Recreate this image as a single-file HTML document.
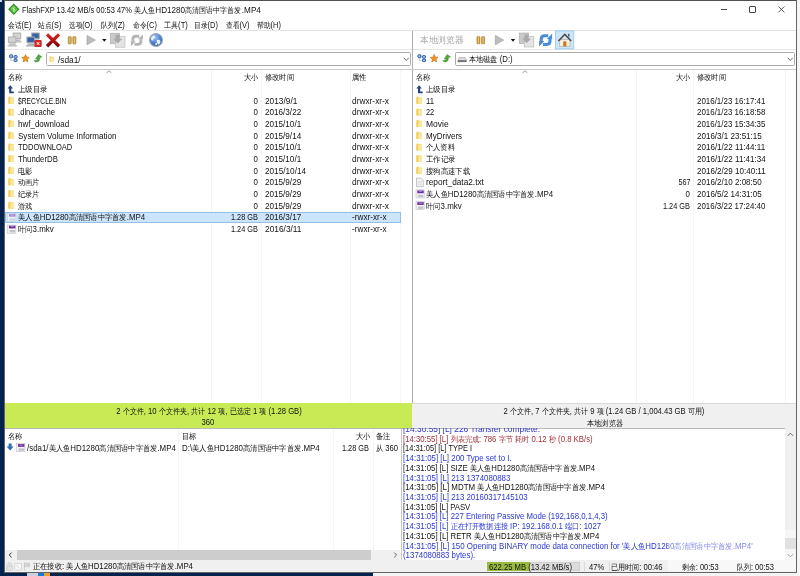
<!DOCTYPE html>
<html lang="zh">
<head>
<meta charset="utf-8">
<title>FlashFXP</title>
<style>
html,body{margin:0;padding:0;}
body{width:800px;height:576px;overflow:hidden;position:relative;background:#fbfbfb;font-family:"Liberation Sans",sans-serif;font-size:8.7px;color:#111;}
.a{position:absolute;}
.t{position:absolute;white-space:pre;line-height:12px;height:12px;}
.c{font-size:0.87em;display:inline-block;}
.hl{position:absolute;height:1px;}
.vl{position:absolute;width:1px;}
svg{position:absolute;overflow:visible;}
</style>
</head>
<body>
<!-- desktop behind the window -->
<div class="a" style="left:0;top:0;width:5px;height:576px;background:#04224e;"></div>
<div class="a" style="left:0;top:571.5px;width:373px;height:4.5px;background:#04224e;"></div>
<div class="a" style="left:373px;top:571.5px;width:427px;height:4.5px;background:#f4f4f4;"></div>
<div class="a" style="left:797px;top:0;width:3px;height:576px;background:#f6f6f6;"></div>
<div class="a" style="left:0;top:0;width:2px;height:1.5px;background:#c8d4e4;"></div>
<div class="a" style="left:27px;top:573px;width:11px;height:3px;background:#c9d3e0;"></div>
<div class="a" style="left:38px;top:573px;width:6px;height:3px;background:#1a78d6;"></div>
<div class="a" style="left:44px;top:573px;width:6px;height:3px;background:#eaa12e;"></div>

<!-- window -->
<div class="a" id="win" style="left:4px;top:0;width:793px;height:572.5px;background:#fff;box-sizing:border-box;border:1px solid #646464;border-top-color:#505050;"></div>

<!--CHROME_BEGIN-->
<!-- ===== lines / panels ===== -->
<div class="hl" style="left:5px;top:30px;width:791px;background:#e4e4e4;"></div>
<div class="hl" style="left:5px;top:49.1px;width:791px;background:#e6e6e6;height:1.2px;"></div>
<div class="a" style="left:411.9px;top:30.5px;width:1.3px;height:373px;background:#b0b0b0;"></div>
<!-- address boxes -->
<div class="a" style="left:46px;top:51.8px;width:364.5px;height:14.5px;box-sizing:border-box;border:1px solid #acacac;border-radius:1.5px;background:#fff;"></div>
<div class="a" style="left:454.5px;top:51.8px;width:340px;height:14.5px;box-sizing:border-box;border:1px solid #acacac;border-radius:1.5px;background:#fff;"></div>
<svg style="left:402.5px;top:57px;" width="7" height="5" viewBox="0 0 7 5"><path d="M0.8 0.8 L3.3 3.4 L5.8 0.8" fill="none" stroke="#555" stroke-width="0.9"/></svg>
<svg style="left:786.5px;top:57px;" width="7" height="5" viewBox="0 0 7 5"><path d="M0.8 0.8 L3.3 3.4 L5.8 0.8" fill="none" stroke="#555" stroke-width="0.9"/></svg>
<!-- list top border -->
<div class="hl" style="left:5px;top:69.4px;width:791px;background:#cacaca;"></div>
<!-- column lines left -->
<div class="vl" style="left:210.8px;top:70px;height:333px;background:#f4f4f4;"></div>
<div class="vl" style="left:260.8px;top:70px;height:333px;background:#f4f4f4;"></div>
<div class="vl" style="left:349.5px;top:70px;height:333px;background:#f4f4f4;"></div>
<div class="vl" style="left:400.2px;top:70px;height:333px;background:#f4f4f4;"></div>
<!-- column lines right -->
<div class="vl" style="left:636px;top:70px;height:333px;background:#f4f4f4;"></div>
<div class="vl" style="left:693px;top:70px;height:333px;background:#f4f4f4;"></div>
<div class="vl" style="left:785.2px;top:70px;height:333px;background:#f4f4f4;"></div>
<!-- sort arrows -->
<svg style="left:105.5px;top:70px;" width="6" height="4" viewBox="0 0 6 4"><path d="M0.6 3 L3 0.8 L5.4 3" fill="none" stroke="#8a8a8a" stroke-width="0.8"/></svg>
<svg style="left:522px;top:70px;" width="6" height="4" viewBox="0 0 6 4"><path d="M0.6 3 L3 0.8 L5.4 3" fill="none" stroke="#8a8a8a" stroke-width="0.8"/></svg>
<!-- selection -->
<div class="a" style="left:5.4px;top:211.8px;width:395.6px;height:11.4px;box-sizing:border-box;border:1px solid #94bfe6;background:#cde5fb;"></div>
<!-- status strips -->
<div class="a" style="left:5px;top:403.4px;width:407px;height:24.6px;background:#c8ea54;"></div>
<div class="a" style="left:412.4px;top:403.4px;width:383.6px;height:24.6px;background:#f0f0f0;border-top:1px solid #d9d9d9;box-sizing:border-box;"></div>
<div class="hl" style="left:5px;top:427.8px;width:791px;background:#b9b9b9;"></div>
<!-- queue -->
<div class="vl" style="left:178.4px;top:428.5px;height:122px;background:#f4f4f4;"></div>
<div class="vl" style="left:333px;top:428.5px;height:122px;background:#f4f4f4;"></div>
<div class="vl" style="left:372.5px;top:428.5px;height:122px;background:#f4f4f4;"></div>
<div class="a" style="left:400.7px;top:428.6px;width:1.2px;height:131.4px;background:#c6c6c6;"></div>
<!-- queue h-scrollbar -->
<div class="a" style="left:5px;top:550.4px;width:395px;height:9.4px;background:#f0f0f0;"></div>
<div class="a" style="left:17px;top:550.4px;width:354px;height:9.4px;background:#cdcdcd;"></div>
<svg style="left:7.5px;top:552px;" width="5" height="6" viewBox="0 0 5 6"><path d="M3.6 0.6 L1.2 3 L3.6 5.4" fill="none" stroke="#333" stroke-width="1"/></svg>
<svg style="left:392.5px;top:552px;" width="5" height="6" viewBox="0 0 5 6"><path d="M1.2 0.6 L3.6 3 L1.2 5.4" fill="none" stroke="#555" stroke-width="0.9"/></svg>
<!-- log v-scrollbar -->
<div class="a" style="left:784.6px;top:428.4px;width:11.4px;height:131.6px;background:#f0f0f0;"></div>
<div class="a" style="left:784.6px;top:538px;width:11.4px;height:11px;background:#cdcdcd;"></div>
<svg style="left:787px;top:432px;" width="7" height="5" viewBox="0 0 7 5"><path d="M0.8 3.8 L3.4 1.2 L6 3.8" fill="none" stroke="#555" stroke-width="0.9"/></svg>
<svg style="left:787px;top:552.5px;" width="7" height="5" viewBox="0 0 7 5"><path d="M0.8 1.2 L3.4 3.8 L6 1.2" fill="none" stroke="#555" stroke-width="0.9"/></svg>
<!-- bottom status bar -->
<div class="a" style="left:5px;top:559.8px;width:791px;height:11.8px;background:#f0f0f0;"></div>
<div class="a" style="left:487px;top:562px;width:93px;height:9.2px;background:#dcdcdc;box-sizing:border-box;border:1px solid #cfcfcf;"></div>
<div class="a" style="left:487px;top:562px;width:42.8px;height:9.2px;background:#9bbb3f;"></div>
<div class="vl" style="left:583.5px;top:561.5px;height:9px;background:#dadada;"></div>
<div class="vl" style="left:608.5px;top:561.5px;height:9px;background:#dadada;"></div>
<div class="a" id="wm2" style="left:668px;top:560px;width:128px;height:11px;background:#f8f8f8;"></div>
<!-- window buttons -->
<div class="hl" style="left:721px;top:9.1px;width:6px;background:#444;height:0.9px;"></div>
<div class="a" style="left:749.2px;top:6.3px;width:6.4px;height:6.4px;box-sizing:border-box;border:0.9px solid #444;border-radius:1px;"></div>
<svg style="left:777.8px;top:6.1px;" width="7" height="7" viewBox="0 0 7 7"><path d="M0.4 0.4 L6.4 6.4 M6.4 0.4 L0.4 6.4" fill="none" stroke="#333" stroke-width="0.8"/></svg>
<!--CHROME_END-->
<!--ICONS_BEGIN-->
<!-- ===== icons ===== -->
<svg style="left:0;top:0;" width="800" height="576" viewBox="0 0 800 576">
<defs>
 <linearGradient id="gx" gradientUnits="userSpaceOnUse" x1="0" y1="33" x2="0" y2="47"><stop offset="0" stop-color="#dc2a2a"/><stop offset="0.5" stop-color="#b51414"/><stop offset="1" stop-color="#6a0606"/></linearGradient>
 <linearGradient id="gp" x1="0" y1="0" x2="1" y2="0"><stop offset="0" stop-color="#b98a2f"/><stop offset="0.5" stop-color="#e5c476"/><stop offset="1" stop-color="#b98a2f"/></linearGradient>
 <radialGradient id="gg" cx="0.4" cy="0.3" r="0.8"><stop offset="0" stop-color="#a9c8f0"/><stop offset="0.55" stop-color="#4a7fd0"/><stop offset="1" stop-color="#234f9a"/></radialGradient>
 <g id="folder"><path d="M0.2 0.5 h2.2 l0.8 0.8 h2.5 v6.2 h-5.5z" fill="#f6d362"/><path d="M2 1.9 h3.7 v5.6 h-3.7z" fill="#fae7a0"/><path d="M0.2 1.9 h1.8 v5.6 h-1.8z" fill="#f4cf5c"/></g>
 <g id="up"><path d="M2.6 0 L5.4 3.3 H3.7 V6.3 H6.2 V8 H1.6 V3.3 H0 Z" fill="#1f3f86"/></g>
 <g id="vid"><rect x="0.3" y="0.3" width="8.2" height="8.1" fill="#f3f3f6" stroke="#b4b4bc" stroke-width="0.5"/><rect x="1.6" y="0.9" width="6.4" height="2.7" fill="#6a2c9c"/><rect x="3.2" y="1.6" width="3.2" height="0.6" fill="#cdb0e6"/><rect x="2.2" y="5.2" width="5.4" height="2.4" fill="#c2c2ca"/></g>
 <g id="vids"><rect x="0.3" y="0.3" width="8.2" height="8.1" fill="#e9f1fa" stroke="#b9c6d8" stroke-width="0.5"/><rect x="1.6" y="0.9" width="6.4" height="2.7" fill="#a488d2"/><rect x="3.2" y="1.6" width="3.2" height="0.6" fill="#dccdf0"/><rect x="2.2" y="5.2" width="5.4" height="2.4" fill="#cdd4e0"/></g>
 <g id="txt"><path d="M0.3 0.3 h4.8 l2 2 v6.5 h-6.8z" fill="#f1f1f1" stroke="#a8a8a8" stroke-width="0.6"/><path d="M1.5 3.6h4.2M1.5 5.1h4.2M1.5 6.6h4.2" stroke="#cfcfcf" stroke-width="0.5"/></g>
 <g id="pc1"><rect x="0" y="0" width="8.6" height="6.6" rx="0.6" fill="#b5b5b5"/><rect x="1.1" y="1" width="6.4" height="4.3" fill="#d3d3d3"/><rect x="1.2" y="7" width="6.6" height="1.3" fill="#b5b5b5"/><rect x="-0.4" y="8.6" width="9.6" height="1.3" rx="0.4" fill="#b5b5b5"/></g>
 <g id="pc2"><rect x="0" y="0" width="8.6" height="6.6" rx="0.6" fill="#9da3ac"/><rect x="1.1" y="1" width="6.4" height="4.3" fill="#3460a8"/><rect x="1.2" y="7" width="6.6" height="1.3" fill="#9da3ac"/><rect x="-0.4" y="8.6" width="9.6" height="1.3" rx="0.4" fill="#9da3ac"/></g>
 <g id="tree"><rect x="0.4" y="0.4" width="3" height="3" rx="0.7" fill="#9dbfec" stroke="#1d4f9e" stroke-width="0.9"/><rect x="4.9" y="1.2" width="3" height="2.6" rx="0.7" fill="#9dbfec" stroke="#1d4f9e" stroke-width="0.9"/><rect x="4.9" y="4.6" width="3" height="2.6" rx="0.7" fill="#9dbfec" stroke="#1d4f9e" stroke-width="0.9"/><path d="M1.6 4.2 V6 H4.2" fill="none" stroke="#a9b4c4" stroke-width="0.7"/></g>
 <g id="star"><path d="M4 0.2 L5.1 2.8 L7.8 3.1 L5.8 5 L6.4 7.6 L4 6.3 L1.6 7.6 L2.2 5 L0.2 3.1 L2.9 2.8 Z" fill="#f7961c" stroke="#b06a1e" stroke-width="0.6" stroke-linejoin="round"/></g>
 <g id="garrow"><path d="M4.6 0 L8 2.6 L5.6 3.4 C6.3 5.4 5.2 7.2 2.6 7.6 C1.4 7.7 0.6 7 0 6.1 C2 6.6 3.4 5.7 3.2 4.1 L1.4 4.7 Z" fill="#4fa83a" stroke="#2f7d22" stroke-width="0.4"/></g>
 <g id="xfer"><rect x="0" y="0" width="9.2" height="10.6" fill="#c9c9c9" stroke="#a9a9a9" stroke-width="0.6"/><rect x="5" y="3.4" width="9.6" height="10.6" fill="#e4e4e4" stroke="#b3b3b3" stroke-width="0.6"/><path d="M5.4 1.6 h4 v4 h2.4 l-4.4 4.6 l-4.4 -4.6 h2.4z" fill="#a9a9a9"/></g>
 <g id="refresh"><path d="M-4.3 1.2 V-1 Q-4.3 -4.3 -1 -4.3 H2.6 M4.3 -1.2 V1 Q4.3 4.3 1 4.3 H-2.6" fill="none" stroke-width="3"/><path d="M1.2 -1 L6.4 -1 L6.4 -6.2 Z M-1.2 1 L-6.4 1 L-6.4 6.2 Z" stroke="none"/></g>
 <g id="pause"><rect x="0" y="0" width="3.1" height="7.4" rx="0.7" fill="url(#gp)" stroke="#a77a25" stroke-width="0.5"/><rect x="4.6" y="0" width="3.1" height="7.4" rx="0.7" fill="url(#gp)" stroke="#a77a25" stroke-width="0.5"/></g>
 <g id="play"><path d="M0 0 L8.4 4.7 L0 9.4 Z" fill="#bdbdbd" stroke="#a2a2a2" stroke-width="0.7" stroke-linejoin="round"/></g>
 <g id="dd"><path d="M0 0 H4.4 L2.2 2.8 Z" fill="#111"/></g>
</defs>
<!-- app icon -->
<g transform="translate(13.8 9.3)"><path d="M0 -5 L4.9 0 L0 5 L-4.9 0 Z" fill="#56bf3c" stroke="#2f8f20" stroke-width="1.1"/><path d="M0.9 -2.9 L-1.6 -0.2 L-0.2 0.3 L-0.9 2.9 L1.6 0.2 L0.2 -0.3 Z" fill="#d4f7c4"/><path d="M-2.6 -0.6 L-0.6 -2.6 M2.6 0.6 L0.6 2.6" stroke="#a9ea92" stroke-width="0.8"/></g>
<!-- left toolbar -->
<use href="#pc1" x="12.6" y="32.6"/><use href="#pc1" x="7.9" y="36.6"/>
<use href="#pc2" x="31.2" y="32.6"/><use href="#pc2" x="26.4" y="36.6"/>
<rect x="34.4" y="40" width="7.3" height="6.9" rx="1" fill="#cf2626"/><path d="M36.8 42.1 l2.6 2.8 m0 -2.8 l-2.6 2.8" stroke="#fff" stroke-width="1"/>
<path d="M47 34.4 L59 46.2 M59 34.4 L47 46.2" stroke="url(#gx)" stroke-width="3.3" stroke-linecap="butt" fill="none"/>
<use href="#pause" x="68.2" y="36.6"/>
<use href="#play" x="87" y="35.4"/>
<use href="#dd" x="102.1" y="39"/>
<use href="#xfer" x="110.4" y="33.2"/>
<g fill="#b5b5b5" stroke="#b5b5b5" transform="translate(136.9 40.3) scale(0.94)"><use href="#refresh"/></g>
<circle cx="156" cy="40" r="6.5" fill="url(#gg)" stroke="#a3adba" stroke-width="1.2"/>
<path d="M152 36.4 c1.6 -1.4 3.4 -0.8 3 0.8 c-0.3 1.4 -1.6 1.2 -1.8 2.6 c-0.2 1.3 -1.4 0.8 -2 -0.4 c-0.4 -1 0 -2.2 0.8 -3z M157.2 40 c1.4 -0.8 3 -0.2 3.2 1.2 c0.2 1.4 -0.8 3 -2 3.4 c-1 0.2 -0.8 -1.4 -1.4 -2.2 c-0.5 -0.8 -0.6 -1.9 0.2 -2.4z" fill="#e8f0fa"/><path d="M155.6 43.2 c0.8 -0.6 1.6 0 1.4 1 c-0.2 0.9 -1 1.4 -1.5 1 c-0.4 -0.5 -0.4 -1.5 0.1 -2z" fill="#e8f0fa"/>
<!-- address row icons -->
<use href="#tree" x="9.2" y="54.4"/><use href="#star" x="21.5" y="54.3"/><use href="#garrow" x="34" y="54.4"/>
<use href="#tree" x="417.6" y="54.4"/><use href="#star" x="430.2" y="54.3"/><use href="#garrow" x="442.6" y="54.4"/>
<path d="M49.5 56.3 h1.8 l0.7 0.7 h2.1 v5.1 h-4.6z" fill="#f4d672"/><path d="M51 57.6 h3.1 v4.5 h-3.1z" fill="#f9e7a2"/>
<path d="M459.2 57.6 h6 l1.2 2.6 v1.6 h-8.6 v-1.6z" fill="#dcdcdc" stroke="#8f8f8f" stroke-width="0.5"/><rect x="457.9" y="60.2" width="8.5" height="1.7" fill="#6a6a6a"/>
<!-- right toolbar -->
<use href="#pause" x="476.9" y="36.5"/>
<use href="#play" x="495.3" y="35.4"/>
<use href="#dd" x="510.8" y="39"/>
<use href="#xfer" x="519.2" y="33"/>
<g fill="#4a8cda" stroke="#4a8cda" transform="translate(545.6 40.1) scale(1.02)"><use href="#refresh"/></g>
<rect x="555.4" y="30.9" width="18.4" height="18" fill="#cde6f9" stroke="#93c6ee" stroke-width="0.8"/>
<path d="M559.6 39.6 h10.4 v6.8 h-10.4z" fill="#f6f1e6" stroke="#9a9488" stroke-width="0.5"/><path d="M557.8 40.4 L564.8 33.2 L571.8 40.4 L570.6 41.4 L564.8 35.6 L559 41.4 Z" fill="#4c4c4c"/><rect x="563.2" y="41.4" width="3.2" height="5" fill="#c67a1c"/><rect x="568" y="33.8" width="1.5" height="2.8" fill="#5a5a5a"/>
<!-- left list icons -->
<use href="#up" x="7.6" y="85.2"/>
<use href="#folder" x="8.2" y="96.26"/><use href="#folder" x="8.2" y="107.91"/><use href="#folder" x="8.2" y="119.57"/><use href="#folder" x="8.2" y="131.22"/><use href="#folder" x="8.2" y="142.88"/><use href="#folder" x="8.2" y="154.53"/><use href="#folder" x="8.2" y="166.19"/><use href="#folder" x="8.2" y="177.84"/><use href="#folder" x="8.2" y="189.50"/><use href="#folder" x="8.2" y="201.15"/>
<use href="#vids" x="7.4" y="213.1"/><use href="#vid" x="7.4" y="224.8"/>
<!-- right list icons -->
<use href="#up" x="416.4" y="85.2"/>
<use href="#folder" x="416.2" y="96.26"/><use href="#folder" x="416.2" y="107.91"/><use href="#folder" x="416.2" y="119.57"/><use href="#folder" x="416.2" y="131.22"/><use href="#folder" x="416.2" y="142.88"/><use href="#folder" x="416.2" y="154.53"/><use href="#folder" x="416.2" y="166.19"/>
<use href="#txt" x="416.2" y="177.8"/><use href="#vid" x="415.7" y="189.6"/><use href="#vid" x="415.7" y="201.3"/>
<!-- queue icons -->
<path d="M8.6 443.6 h3 v3 h2 l-3.5 3.8 l-3.5 -3.8 h2z" fill="#2b6fbe"/>
<use href="#vid" x="16.4" y="443.2"/>
<!-- status bar icons -->
<path d="M6.6 566 h6 v4.4 h-6z M7.6 566 v-1.4 a2 2 0 0 1 4 0 v1.4" fill="#e2e2e2" stroke="#c9c9c9" stroke-width="0.6"/>
<rect x="14.8" y="563.4" width="6.6" height="6.6" fill="#f7f7f7" stroke="#c6c6c6" stroke-width="0.6"/><path d="M16.4 565 l2.4 2.4" stroke="#aaa" stroke-width="0.6"/>
<path d="M24.4 562.6 h5.6 v4.6 h-5.6z" fill="#d2d2d2"/><path d="M24.4 562.6 v8" stroke="#bdbdbd" stroke-width="0.7"/>
</svg>
<!--ICONS_END-->
<div id="texts" style="position:absolute;left:0;top:0;width:800px;height:576px;will-change:transform;">
<span class="t" style="top:3.60px;left:22.00px;transform-origin:0 50%;font-size:9.30px;transform:scaleX(0.8000);">FlashFXP 13.42 MB/s 00:53 47% </span>
<span class="t" style="top:3.60px;left:134.00px;transform-origin:0 50%;font-size:9.30px;transform:scaleX(0.8759);"><span class="c" style="min-width:3em">美人鱼</span>HD1280<span class="c" style="min-width:8em">高清国语中字首发</span>.MP4</span>
<span class="t" style="top:19.20px;left:8.00px;transform-origin:0 50%;transform:scaleX(0.8500);"><span class="c" style="min-width:2em">会话</span>(E)</span>
<span class="t" style="top:19.20px;left:38.00px;transform-origin:0 50%;transform:scaleX(0.8500);"><span class="c" style="min-width:2em">站点</span>(S)</span>
<span class="t" style="top:19.20px;left:69.00px;transform-origin:0 50%;transform:scaleX(0.8207);"><span class="c" style="min-width:2em">选项</span>(O)</span>
<span class="t" style="top:19.20px;left:101.00px;transform-origin:0 50%;transform:scaleX(0.8815);"><span class="c" style="min-width:2em">队列</span>(Z)</span>
<span class="t" style="top:19.20px;left:132.50px;transform-origin:0 50%;transform:scaleX(0.8500);"><span class="c" style="min-width:2em">命令</span>(C)</span>
<span class="t" style="top:19.20px;left:164.00px;transform-origin:0 50%;transform:scaleX(0.8815);"><span class="c" style="min-width:2em">工具</span>(T)</span>
<span class="t" style="top:19.20px;left:194.00px;transform-origin:0 50%;transform:scaleX(0.8500);"><span class="c" style="min-width:2em">目录</span>(D)</span>
<span class="t" style="top:19.20px;left:226.00px;transform-origin:0 50%;transform:scaleX(0.8500);"><span class="c" style="min-width:2em">查看</span>(V)</span>
<span class="t" style="top:19.20px;left:257.00px;transform-origin:0 50%;transform:scaleX(0.8500);"><span class="c" style="min-width:2em">帮助</span>(H)</span>
<span class="t" style="top:53.50px;left:58.00px;transform-origin:0 50%;transform:scaleX(0.9583);">/sda1/</span>
<span class="t" style="top:34.40px;left:420.00px;transform-origin:0 50%;color:#a6a6a6;font-size:10.20px;transform:scaleX(0.9722);"><span class="c" style="min-width:5em">本地浏览器</span></span>
<span class="t" style="top:53.30px;left:468.75px;transform-origin:0 50%;transform:scaleX(0.8929);"><span class="c" style="min-width:4em">本地磁盘</span> (D:)</span>
<span class="t" style="top:70.60px;left:7.50px;transform-origin:0 50%;transform:scaleX(0.9062);"><span class="c" style="min-width:2em">名称</span></span>
<span class="t" style="top:70.60px;right:542.00px;transform-origin:100% 50%;transform:scaleX(0.8938);"><span class="c" style="min-width:2em">大小</span></span>
<span class="t" style="top:70.60px;left:264.70px;transform-origin:0 50%;transform:scaleX(0.9062);"><span class="c" style="min-width:4em">修改时间</span></span>
<span class="t" style="top:70.60px;left:352.00px;transform-origin:0 50%;transform:scaleX(0.9062);"><span class="c" style="min-width:2em">属性</span></span>
<span class="t" style="top:83.15px;left:17.50px;transform-origin:0 50%;transform:scaleX(0.9219);"><span class="c" style="min-width:4em">上级目录</span></span>
<span class="t" style="top:94.81px;left:17.50px;transform-origin:0 50%;transform:scaleX(0.7698);">$RECYCLE.BIN</span>
<span class="t" style="top:94.81px;right:542.00px;transform-origin:100% 50%;transform:scaleX(0.9000);">0</span>
<span class="t" style="top:94.81px;left:264.70px;transform-origin:0 50%;transform:scaleX(0.9559);">2013/9/1</span>
<span class="t" style="top:94.81px;left:352.00px;transform-origin:0 50%;transform:scaleX(0.9590);">drwxr-xr-x</span>
<span class="t" style="top:106.46px;left:17.50px;transform-origin:0 50%;transform:scaleX(0.8810);">.dlnacache</span>
<span class="t" style="top:106.46px;right:542.00px;transform-origin:100% 50%;transform:scaleX(0.9000);">0</span>
<span class="t" style="top:106.46px;left:264.70px;transform-origin:0 50%;transform:scaleX(0.9359);">2016/3/22</span>
<span class="t" style="top:106.46px;left:352.00px;transform-origin:0 50%;transform:scaleX(0.9590);">drwxr-xr-x</span>
<span class="t" style="top:118.12px;left:17.50px;transform-origin:0 50%;transform:scaleX(0.9196);">hwf_download</span>
<span class="t" style="top:118.12px;right:542.00px;transform-origin:100% 50%;transform:scaleX(0.9000);">0</span>
<span class="t" style="top:118.12px;left:264.70px;transform-origin:0 50%;transform:scaleX(0.9359);">2015/10/1</span>
<span class="t" style="top:118.12px;left:352.00px;transform-origin:0 50%;transform:scaleX(0.9590);">drwxr-xr-x</span>
<span class="t" style="top:129.77px;left:17.50px;transform-origin:0 50%;transform:scaleX(0.9269);">System Volume Information</span>
<span class="t" style="top:129.77px;right:542.00px;transform-origin:100% 50%;transform:scaleX(0.9000);">0</span>
<span class="t" style="top:129.77px;left:264.70px;transform-origin:0 50%;transform:scaleX(0.9359);">2015/9/14</span>
<span class="t" style="top:129.77px;left:352.00px;transform-origin:0 50%;transform:scaleX(0.9590);">drwxr-xr-x</span>
<span class="t" style="top:141.43px;left:17.50px;transform-origin:0 50%;transform:scaleX(0.8651);">TDDOWNLOAD</span>
<span class="t" style="top:141.43px;right:542.00px;transform-origin:100% 50%;transform:scaleX(0.9000);">0</span>
<span class="t" style="top:141.43px;left:264.70px;transform-origin:0 50%;transform:scaleX(0.9359);">2015/10/1</span>
<span class="t" style="top:141.43px;left:352.00px;transform-origin:0 50%;transform:scaleX(0.9590);">drwxr-xr-x</span>
<span class="t" style="top:153.08px;left:17.50px;transform-origin:0 50%;transform:scaleX(0.8977);">ThunderDB</span>
<span class="t" style="top:153.08px;right:542.00px;transform-origin:100% 50%;transform:scaleX(0.9000);">0</span>
<span class="t" style="top:153.08px;left:264.70px;transform-origin:0 50%;transform:scaleX(0.9359);">2015/10/1</span>
<span class="t" style="top:153.08px;left:352.00px;transform-origin:0 50%;transform:scaleX(0.9590);">drwxr-xr-x</span>
<span class="t" style="top:164.74px;left:17.50px;transform-origin:0 50%;transform:scaleX(0.9062);"><span class="c" style="min-width:2em">电影</span></span>
<span class="t" style="top:164.74px;right:542.00px;transform-origin:100% 50%;transform:scaleX(0.9000);">0</span>
<span class="t" style="top:164.74px;left:264.70px;transform-origin:0 50%;transform:scaleX(0.9442);">2015/10/14</span>
<span class="t" style="top:164.74px;left:352.00px;transform-origin:0 50%;transform:scaleX(0.9590);">drwxr-xr-x</span>
<span class="t" style="top:176.39px;left:17.50px;transform-origin:0 50%;transform:scaleX(0.8958);"><span class="c" style="min-width:3em">动画片</span></span>
<span class="t" style="top:176.39px;right:542.00px;transform-origin:100% 50%;transform:scaleX(0.9000);">0</span>
<span class="t" style="top:176.39px;left:264.70px;transform-origin:0 50%;transform:scaleX(0.9359);">2015/9/29</span>
<span class="t" style="top:176.39px;left:352.00px;transform-origin:0 50%;transform:scaleX(0.9590);">drwxr-xr-x</span>
<span class="t" style="top:188.05px;left:17.50px;transform-origin:0 50%;transform:scaleX(0.8958);"><span class="c" style="min-width:3em">纪录片</span></span>
<span class="t" style="top:188.05px;right:542.00px;transform-origin:100% 50%;transform:scaleX(0.9000);">0</span>
<span class="t" style="top:188.05px;left:264.70px;transform-origin:0 50%;transform:scaleX(0.9359);">2015/9/29</span>
<span class="t" style="top:188.05px;left:352.00px;transform-origin:0 50%;transform:scaleX(0.9590);">drwxr-xr-x</span>
<span class="t" style="top:199.70px;left:17.50px;transform-origin:0 50%;transform:scaleX(0.9062);"><span class="c" style="min-width:2em">游戏</span></span>
<span class="t" style="top:199.70px;right:542.00px;transform-origin:100% 50%;transform:scaleX(0.9000);">0</span>
<span class="t" style="top:199.70px;left:264.70px;transform-origin:0 50%;transform:scaleX(0.9359);">2015/9/29</span>
<span class="t" style="top:199.70px;left:352.00px;transform-origin:0 50%;transform:scaleX(0.9590);">drwxr-xr-x</span>
<span class="t" style="top:211.35px;left:17.50px;transform-origin:0 50%;transform:scaleX(0.9071);"><span class="c" style="min-width:3em">美人鱼</span>HD1280<span class="c" style="min-width:8em">高清国语中字首发</span>.MP4</span>
<span class="t" style="top:211.35px;right:542.00px;transform-origin:100% 50%;transform:scaleX(0.8438);">1.28 GB</span>
<span class="t" style="top:211.35px;left:264.70px;transform-origin:0 50%;transform:scaleX(0.9359);">2016/3/17</span>
<span class="t" style="top:211.35px;left:352.00px;transform-origin:0 50%;transform:scaleX(0.9459);">-rwxr-xr-x</span>
<span class="t" style="top:223.01px;left:17.50px;transform-origin:0 50%;transform:scaleX(0.9103);"><span class="c" style="min-width:2em">叶问</span>3.mkv</span>
<span class="t" style="top:223.01px;right:542.00px;transform-origin:100% 50%;transform:scaleX(0.8438);">1.24 GB</span>
<span class="t" style="top:223.01px;left:264.70px;transform-origin:0 50%;transform:scaleX(0.9605);">2016/3/11</span>
<span class="t" style="top:223.01px;left:352.00px;transform-origin:0 50%;transform:scaleX(0.9459);">-rwxr-xr-x</span>
<span class="t" style="top:70.60px;left:416.25px;transform-origin:0 50%;transform:scaleX(0.9062);"><span class="c" style="min-width:2em">名称</span></span>
<span class="t" style="top:70.60px;right:109.70px;transform-origin:100% 50%;transform:scaleX(0.8938);"><span class="c" style="min-width:2em">大小</span></span>
<span class="t" style="top:70.60px;left:696.50px;transform-origin:0 50%;transform:scaleX(0.9062);"><span class="c" style="min-width:4em">修改时间</span></span>
<span class="t" style="top:83.15px;left:426.00px;transform-origin:0 50%;transform:scaleX(0.9219);"><span class="c" style="min-width:4em">上级目录</span></span>
<span class="t" style="top:94.81px;left:426.00px;transform-origin:0 50%;transform:scaleX(0.8889);">11</span>
<span class="t" style="top:94.81px;left:696.50px;transform-origin:0 50%;transform:scaleX(0.9133);">2016/1/23 16:17:41</span>
<span class="t" style="top:106.46px;left:426.00px;transform-origin:0 50%;transform:scaleX(0.8500);">22</span>
<span class="t" style="top:106.46px;left:696.50px;transform-origin:0 50%;transform:scaleX(0.9133);">2016/1/23 16:18:58</span>
<span class="t" style="top:118.12px;left:426.00px;transform-origin:0 50%;transform:scaleX(0.9783);">Movie</span>
<span class="t" style="top:118.12px;left:696.50px;transform-origin:0 50%;transform:scaleX(0.9133);">2016/1/23 15:34:35</span>
<span class="t" style="top:129.77px;left:426.00px;transform-origin:0 50%;transform:scaleX(0.9231);">MyDrivers</span>
<span class="t" style="top:129.77px;left:696.50px;transform-origin:0 50%;transform:scaleX(0.9242);">2016/3/1 23:51:15</span>
<span class="t" style="top:141.43px;left:426.00px;transform-origin:0 50%;transform:scaleX(0.9062);"><span class="c" style="min-width:4em">个人资料</span></span>
<span class="t" style="top:141.43px;left:696.50px;transform-origin:0 50%;transform:scaleX(0.9257);">2016/1/22 11:44:11</span>
<span class="t" style="top:153.08px;left:426.00px;transform-origin:0 50%;transform:scaleX(0.9219);"><span class="c" style="min-width:4em">工作记录</span></span>
<span class="t" style="top:153.08px;left:696.50px;transform-origin:0 50%;transform:scaleX(0.9257);">2016/1/22 11:41:34</span>
<span class="t" style="top:164.74px;left:426.00px;transform-origin:0 50%;transform:scaleX(0.9167);"><span class="c" style="min-width:6em">搜狗高速下载</span></span>
<span class="t" style="top:164.74px;left:696.50px;transform-origin:0 50%;transform:scaleX(0.9257);">2016/2/29 10:40:11</span>
<span class="t" style="top:176.39px;left:426.00px;transform-origin:0 50%;transform:scaleX(0.9508);">report_data2.txt</span>
<span class="t" style="top:176.39px;right:109.70px;transform-origin:100% 50%;transform:scaleX(0.8333);">567</span>
<span class="t" style="top:176.39px;left:696.50px;transform-origin:0 50%;transform:scaleX(0.9242);">2016/2/10 2:08:50</span>
<span class="t" style="top:188.05px;left:426.00px;transform-origin:0 50%;transform:scaleX(0.9071);"><span class="c" style="min-width:3em">美人鱼</span>HD1280<span class="c" style="min-width:8em">高清国语中字首发</span>.MP4</span>
<span class="t" style="top:188.05px;right:109.70px;transform-origin:100% 50%;transform:scaleX(0.9000);">0</span>
<span class="t" style="top:188.05px;left:696.50px;transform-origin:0 50%;transform:scaleX(0.9242);">2016/5/2 14:31:05</span>
<span class="t" style="top:199.70px;left:426.00px;transform-origin:0 50%;transform:scaleX(0.9103);"><span class="c" style="min-width:2em">叶问</span>3.mkv</span>
<span class="t" style="top:199.70px;right:109.70px;transform-origin:100% 50%;transform:scaleX(0.8438);">1.24 GB</span>
<span class="t" style="top:199.70px;left:696.50px;transform-origin:0 50%;transform:scaleX(0.9133);">2016/3/22 17:24:40</span>
<div class="t" style="top:405.30px;left:208.50px;width:0;overflow:visible;"><span style="display:inline-block;transform:translateX(-50%) scaleX(0.8833);">2 <span class="c" style="min-width:3em">个文件</span>, 10 <span class="c" style="min-width:4em">个文件夹</span>, <span class="c" style="min-width:2em">共计</span> 12 <span class="c" style="min-width:1em">项</span>, <span class="c" style="min-width:3em">已选定</span> 1 <span class="c" style="min-width:1em">项</span> (1.28 GB)</span></div>
<div class="t" style="top:416.30px;left:208.30px;width:0;overflow:visible;"><span style="display:inline-block;transform:translateX(-50%) scaleX(0.8800);">360</span></div>
<div class="t" style="top:404.80px;left:604.00px;width:0;overflow:visible;"><span style="display:inline-block;transform:translateX(-50%) scaleX(0.8794);">2 <span class="c" style="min-width:3em">个文件</span>, 7 <span class="c" style="min-width:4em">个文件夹</span>, <span class="c" style="min-width:2em">共计</span> 9 <span class="c" style="min-width:1em">项</span> (1.24 GB / 1,004.43 GB <span class="c" style="min-width:2em">可用</span>)</span></div>
<div class="t" style="top:416.50px;left:604.50px;width:0;overflow:visible;"><span style="display:inline-block;transform:translateX(-50%) scaleX(0.8875);"><span class="c" style="min-width:5em">本地浏览器</span></span></div>
<span class="t" style="top:429.60px;left:7.50px;transform-origin:0 50%;transform:scaleX(0.9062);"><span class="c" style="min-width:2em">名称</span></span>
<span class="t" style="top:429.60px;left:182.00px;transform-origin:0 50%;transform:scaleX(0.9062);"><span class="c" style="min-width:2em">目标</span></span>
<span class="t" style="top:429.60px;right:430.30px;transform-origin:100% 50%;transform:scaleX(0.8938);"><span class="c" style="min-width:2em">大小</span></span>
<span class="t" style="top:429.60px;left:375.60px;transform-origin:0 50%;transform:scaleX(0.9062);"><span class="c" style="min-width:2em">备注</span></span>
<span class="t" style="top:441.50px;left:27.00px;transform-origin:0 50%;transform:scaleX(0.9085);">/sda1/<span class="c" style="min-width:3em">美人鱼</span>HD1280<span class="c" style="min-width:8em">高清国语中字首发</span>.MP4</span>
<span class="t" style="top:441.50px;left:182.00px;transform-origin:0 50%;transform:scaleX(0.9106);">D:\<span class="c" style="min-width:3em">美人鱼</span>HD1280<span class="c" style="min-width:8em">高清国语中字首发</span>.MP4</span>
<span class="t" style="top:441.50px;right:430.80px;transform-origin:100% 50%;transform:scaleX(0.8438);">1.28 GB</span>
<span class="t" style="top:441.50px;left:375.60px;transform-origin:0 50%;transform:scaleX(0.8800);"><span class="c" style="min-width:1em">从</span> 360</span>
<div class="a" style="left:401.6px;top:428.4px;width:383px;height:131.4px;overflow:hidden;">
<span class="t" style="top:-5.45px;left:1.30px;transform-origin:0 50%;color:#2a36d6;transform:scaleX(0.9648);">[14:30:55] [L] 226 Transfer complete.</span>
<span class="t" style="top:4.27px;left:1.30px;transform-origin:0 50%;color:#a03038;transform:scaleX(0.8939);">[14:30:55] [L] <span class="c" style="min-width:4em">列表完成</span>: 786 <span class="c" style="min-width:2em">字节</span> <span class="c" style="min-width:2em">耗时</span> 0.12 <span class="c" style="min-width:1em">秒</span> (0.8 KB/s)</span>
<span class="t" style="top:13.99px;left:1.30px;transform-origin:0 50%;transform:scaleX(0.8580);">[14:31:05] [L] TYPE I</span>
<span class="t" style="top:23.71px;left:1.30px;transform-origin:0 50%;color:#2a36d6;transform:scaleX(0.9083);">[14:31:05] [L] 200 Type set to I.</span>
<span class="t" style="top:33.43px;left:1.30px;transform-origin:0 50%;transform:scaleX(0.8930);">[14:31:05] [L] SIZE <span class="c" style="min-width:3em">美人鱼</span>HD1280<span class="c" style="min-width:8em">高清国语中字首发</span>.MP4</span>
<span class="t" style="top:43.15px;left:1.30px;transform-origin:0 50%;color:#2a36d6;transform:scaleX(0.9068);">[14:31:05] [L] 213 1374080883</span>
<span class="t" style="top:52.87px;left:1.30px;transform-origin:0 50%;transform:scaleX(0.9099);">[14:31:05] [L] MDTM <span class="c" style="min-width:3em">美人鱼</span>HD1280<span class="c" style="min-width:8em">高清国语中字首发</span>.MP4</span>
<span class="t" style="top:62.59px;left:1.30px;transform-origin:0 50%;color:#2a36d6;transform:scaleX(0.9058);">[14:31:05] [L] 213 20160317145103</span>
<span class="t" style="top:72.31px;left:1.30px;transform-origin:0 50%;transform:scaleX(0.8882);">[14:31:05] [L] PASV</span>
<span class="t" style="top:82.03px;left:1.30px;transform-origin:0 50%;color:#2a36d6;transform:scaleX(0.8978);">[14:31:05] [L] 227 Entering Passive Mode (192,168,0,1,4,3)</span>
<span class="t" style="top:91.75px;left:1.30px;transform-origin:0 50%;color:#2a36d6;transform:scaleX(0.8959);">[14:31:05] [L] <span class="c" style="min-width:8em">正在打开数据连接</span> IP: 192.168.0.1 <span class="c" style="min-width:2em">端口</span>: 1027</span>
<span class="t" style="top:101.47px;left:1.30px;transform-origin:0 50%;transform:scaleX(0.8950);">[14:31:05] [L] RETR <span class="c" style="min-width:3em">美人鱼</span>HD1280<span class="c" style="min-width:8em">高清国语中字首发</span>.MP4</span>
<span class="t" style="top:111.19px;left:1.30px;transform-origin:0 50%;color:#2a36d6;transform:scaleX(0.9115);">[14:31:05] [L] 150 Opening BINARY mode data connection for '<span class="c" style="min-width:3em">美人鱼</span>HD1280<span class="c" style="min-width:8em">高清国语中字首发</span>.MP4'</span>
<span class="t" style="top:120.91px;left:1.30px;transform-origin:0 50%;color:#2a36d6;transform:scaleX(0.9062);">(1374080883 bytes).</span>
</div>
<span class="t" style="top:560.00px;left:32.50px;transform-origin:0 50%;transform:scaleX(0.9040);"><span class="c" style="min-width:4em">正在接收</span>: <span class="c" style="min-width:3em">美人鱼</span>HD1280<span class="c" style="min-width:8em">高清国语中字首发</span>.MP4</span>
<span class="t" style="top:561.10px;left:488.80px;transform-origin:0 50%;transform:scaleX(0.8809);">622.25 MB (13.42 MB/s)</span>
<span class="t" style="top:561.10px;left:588.80px;transform-origin:0 50%;transform:scaleX(0.8706);">47%</span>
<span class="t" style="top:561.10px;left:611.25px;transform-origin:0 50%;transform:scaleX(0.8814);"><span class="c" style="min-width:4em">已用时间</span>: 00:46</span>
<span class="t" style="top:561.10px;left:681.50px;transform-origin:0 50%;transform:scaleX(0.8605);"><span class="c" style="min-width:2em">剩余</span>: 00:53</span>
<span class="t" style="top:561.10px;left:737.00px;transform-origin:0 50%;transform:scaleX(0.8698);"><span class="c" style="min-width:2em">队列</span>: 00:53</span>
</div>
<div class="a" id="wm" style="left:668px;top:530px;width:128px;height:30px;background:rgba(255,255,255,0.4);"></div>
</body>
</html>
